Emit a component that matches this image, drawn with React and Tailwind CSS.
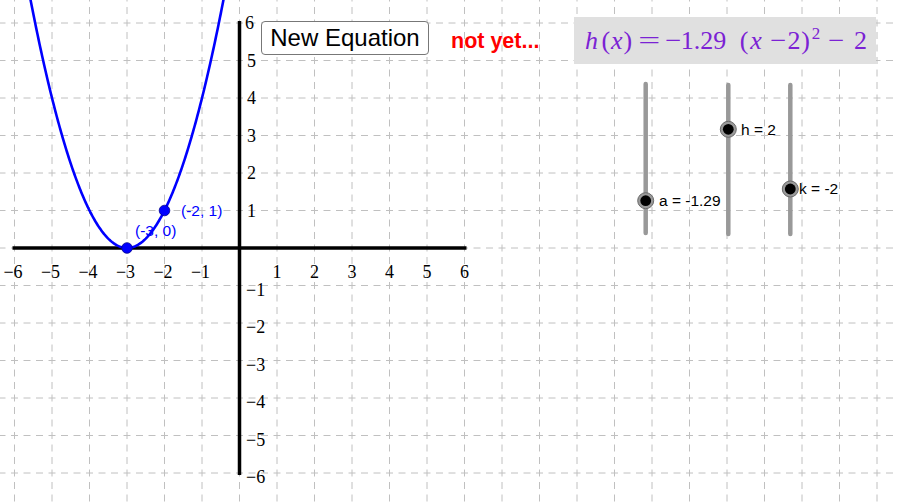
import React from "react";

const U = 37.5;
const OX = 239.5;
const OY = 248;
const px = (x) => OX + U * x;
const py = (y) => OY - U * y;

function Canvas() {
  const vLines = [];
  for (let k = -6; k <= 17; k++) vLines.push(px(k));
  const hLines = [];
  for (let k = -6; k <= 6; k++) hLines.push(py(k));

  let d = "";
  for (let x = -5.7; x <= -0.3; x += 0.02) {
    const y = (x + 3) * (x + 3);
    d += (d ? " L " : "M ") + px(x).toFixed(2) + " " + py(y).toFixed(2);
  }

  const serif = "'Liberation Serif', 'Times New Roman', serif";
  const sans = "'Liberation Sans', Arial, sans-serif";

  const xLabels = [-6, -5, -4, -3, -2, -1, 1, 2, 3, 4, 5, 6];
  const yPos = [6, 5, 4, 3, 2, 1];
  const yNeg = [-1, -2, -3, -4, -5, -6];

  const sliders = [
    { x: 645.7, y1: 84, y2: 233, ky: 200.7, label: "a = -1.29", lx: 659, ly: 205.5 },
    { x: 728.3, y1: 85, y2: 234, ky: 129.3, label: "h = 2", lx: 741, ly: 134.5 },
    { x: 790.3, y1: 85, y2: 234, ky: 189, label: "k = -2", lx: 799, ly: 194 },
  ];

  return (
    <svg className="absolute inset-0" width="897" height="504" viewBox="0 0 897 504">
      {vLines.map((x) => (
        <line key={"v" + x} x1={x} y1={-5.5} x2={x} y2={510} stroke="#c0c0c0" strokeWidth="1" strokeDasharray="7 5.5" />
      ))}
      {hLines.map((y) => (
        <line key={"h" + y} x1={-1.5} y1={y} x2={900} y2={y} stroke="#c0c0c0" strokeWidth="1" strokeDasharray="7 5.5" />
      ))}

      <line x1={12.5} y1={OY} x2={466.5} y2={OY} stroke="#000" strokeWidth="3.5" />
      <line x1={OX} y1={21} x2={OX} y2={475} stroke="#000" strokeWidth="3.5" />

      {xLabels.map((v) => (
        <text key={"xl" + v} x={px(v) - (v < 0 ? 1.5 : 0)} y={277.5} textAnchor="middle" fontFamily={serif} fontSize="18" fill="#000">
          {v < 0 ? "\u2212" + Math.abs(v) : v}
        </text>
      ))}
      {yPos.map((v) => (
        <text key={"yp" + v} x={v === 6 ? 245 : 247} y={py(v) + 6} fontFamily={serif} fontSize="18" fill="#000">
          {v}
        </text>
      ))}
      {yNeg.map((v) => (
        <text key={"yn" + v} x={246} y={py(v) + 10} fontFamily={serif} fontSize="18" fill="#000">
          {"\u2212" + Math.abs(v)}
        </text>
      ))}

      <path d={d} fill="none" stroke="#0000ff" strokeWidth="2.6" />
      <circle cx={px(-3)} cy={py(0)} r="5.3" fill="#0000ff" stroke="#00008c" strokeWidth="0.8" />
      <circle cx={px(-2)} cy={py(1)} r="5.3" fill="#0000ff" stroke="#00008c" strokeWidth="0.8" />
      <text x={181} y={215.5} fontFamily={sans} fontSize="15.5" fill="#0000ff">(-2, 1)</text>
      <text x={135} y={235.5} fontFamily={sans} fontSize="15.5" fill="#0000ff">(-3, 0)</text>

      {sliders.map((s) => (
        <g key={s.label}>
          <line x1={s.x} y1={s.y1} x2={s.x} y2={s.y2} stroke="#999999" strokeWidth="4.5" strokeLinecap="round" />
          <circle cx={s.x} cy={s.ky} r="8" fill="#9a9a9a" stroke="#6a6a6a" strokeWidth="1" />
          <circle cx={s.x} cy={s.ky} r="5.4" fill="#000" />
          <text x={s.lx} y={s.ly} fontFamily={sans} fontSize="15.5" fill="#000">{s.label}</text>
        </g>
      ))}
    </svg>
  );
}

function Formula() {
  return (
    <div className="absolute left-[574px] top-[17px] w-[302px] h-[47px] bg-[#e0e0e0]">
      <div className="pl-[8px] pt-[10.5px] leading-none whitespace-nowrap text-[26px] text-[#7b22d4] font-['Liberation_Serif',serif]">
        <span className="inline-block w-[19px] text-center italic">h</span>
        <span className="inline-block w-[9.5px] text-center">(</span>
        <span className="inline-block w-[12.5px] text-center italic">x</span>
        <span className="inline-block w-[9.5px] text-center">)</span>
        <span className="inline-block w-[33px] text-center"><span className="inline-block scale-x-150">=</span></span>
        <span className="inline-block w-[15px] text-center"><span className="inline-block scale-x-110">{"\u2212"}</span></span>
        <span className="inline-block w-[46px] text-center">1.29</span>
        <span className="inline-block w-[9px] ml-[13px] text-center">(</span>
        <span className="inline-block w-[15px] text-center italic">x</span>
        <span className="inline-block w-[15px] ml-[7px] text-center"><span className="inline-block scale-x-110">{"\u2212"}</span></span>
        <span className="inline-block w-[13px] ml-[2px] text-center">2</span>
        <span className="inline-block w-[10px] text-center">)</span>
        <span className="inline-block w-[11px] text-center text-[17px] leading-[10px] align-[10px]">2</span>
        <span className="inline-block w-[15px] ml-[7.5px] text-center"><span className="inline-block scale-x-110">{"\u2212"}</span></span>
        <span className="inline-block w-[13px] ml-[10px] text-center">2</span>
      </div>
    </div>
  );
}

export default function App() {
  return (
    <div className="relative w-[897px] h-[504px] bg-white overflow-hidden">
      <Canvas />
      <button className="absolute left-[261px] top-[21px] w-[168px] h-[34px] flex items-center justify-center bg-white border-[1.5px] border-[#777777] rounded-[4px] text-[24px] leading-none text-black font-['Liberation_Sans',Arial,sans-serif]">
        New Equation
      </button>
      <div className="absolute left-[451px] top-[31px] text-[21.5px] leading-none font-bold text-[#ff0000] font-['Liberation_Sans',Arial,sans-serif]">
        not yet...
      </div>
      <Formula />
    </div>
  );
}
